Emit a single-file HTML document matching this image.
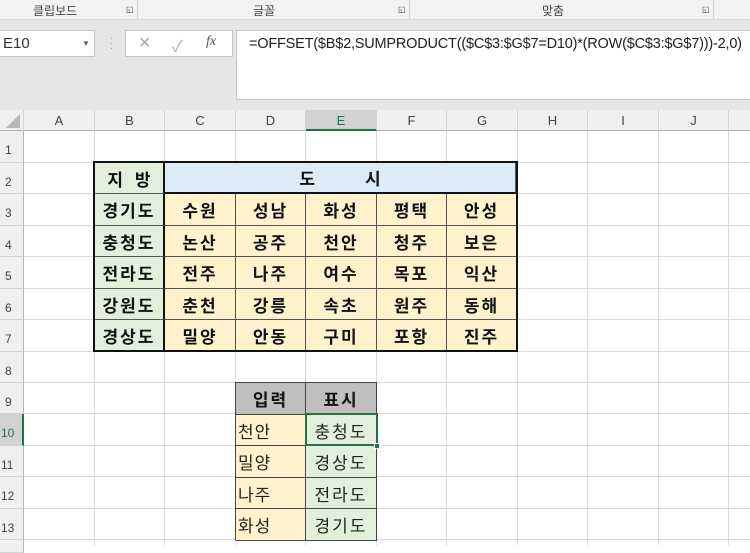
<!DOCTYPE html>
<html><head><meta charset="utf-8"><style>
*{margin:0;padding:0;box-sizing:border-box}
body{width:750px;height:545px;overflow:hidden;background:#fff;position:relative;font-family:"Liberation Sans","Noto Sans CJK KR",sans-serif}
.a{position:absolute}
.rib{left:0;top:0;width:750px;height:20px;background:#f3f3f3;border-bottom:1px solid #d6d6d6;font-size:12px;color:#444}
.gray{left:0;top:20px;width:750px;height:90px;background:#e6e6e6}
.box{background:#fff;border:1px solid #c6c6c6}
.ch{top:110px;height:21px;background:#efefef;border-right:1px solid #d4d4d4;border-bottom:1px solid #b5b5b5;font-size:13px;color:#444;text-align:center;line-height:21px}
.rh{left:0;width:24px;background:#efefef;border-bottom:1px solid #d4d4d4;border-right:1px solid #b5b5b5;font-size:12px;color:#444;padding-left:5px;padding-top:12px}
.vl{top:131px;width:1px;height:414px;background:#dadada}
.hl{left:24px;width:726px;height:1px;background:#dadada}
.c{display:flex;align-items:center;justify-content:center;font-family:"Noto Sans CJK KR","WenQuanYi Zen Hei",sans-serif;font-size:17px;font-weight:bold;color:#111;border-right:1px solid #555;border-bottom:1px solid #555;letter-spacing:2px}
.g{background:#e2efda}.y{background:#fff2cc}.b{background:#ddebf7}.h{background:#bfbfbf}
.n{font-weight:normal;color:#222}
</style></head><body>
<div class="a rib">
<span class="a" style="left:33px;top:2px">클립보드</span><span class="a" style="left:126px;top:5px;font-size:8px">◱</span>
<div class="a" style="left:137px;top:0;width:1px;height:19px;background:#d0d0d0"></div>
<span class="a" style="left:253px;top:2px">글꼴</span><span class="a" style="left:398px;top:5px;font-size:8px">◱</span>
<div class="a" style="left:409px;top:0;width:1px;height:19px;background:#d0d0d0"></div>
<span class="a" style="left:542px;top:2px">맞춤</span><span class="a" style="left:702px;top:5px;font-size:8px">◱</span>
<div class="a" style="left:713px;top:0;width:1px;height:19px;background:#d0d0d0"></div>
</div>
<div class="a gray"></div>
<div class="a box" style="left:-2px;top:30px;width:97px;height:27px;font-size:15px;color:#333;padding:4px 0 0 4px">E10<span class="a" style="left:83px;top:8px;font-size:8px;color:#666">▼</span></div>
<div class="a" style="left:110px;top:36px;color:#999;font-size:10px;line-height:5px">·<br>·<br>·</div>
<div class="a box" style="left:125px;top:30px;width:108px;height:27px;color:#aaa;font-size:16px">
<span class="a" style="left:12px;top:2px">✕</span><span class="a" style="left:46px;top:2px">✓</span><span class="a" style="left:80px;top:3px;font-family:'Liberation Serif',serif;font-style:italic;color:#555;font-size:14px">fx</span></div>
<div class="a box" style="left:236px;top:30px;width:520px;height:70px;font-size:14.5px;color:#222;padding:5px 0 0 12px;letter-spacing:-0.2px">=OFFSET($B$2,SUMPRODUCT(($C$3:$G$7=D10)*(ROW($C$3:$G$7)))-2,0)</div>

<div class="a ch" style="left:0;width:24px"><div class="a" style="left:6px;top:4px;width:0;height:0;border-left:14px solid transparent;border-bottom:14px solid #b8b8b8"></div></div>
<div class="a ch" style="left:24px;width:71px">A</div>
<div class="a ch" style="left:95px;width:70px">B</div>
<div class="a ch" style="left:165px;width:71px">C</div>
<div class="a ch" style="left:236px;width:70px">D</div>
<div class="a ch" style="left:306px;width:71px;background:#d2d2d2;color:#217346;border-bottom:2px solid #217346">E</div>
<div class="a ch" style="left:377px;width:70px">F</div>
<div class="a ch" style="left:447px;width:71px">G</div>
<div class="a ch" style="left:518px;width:70px">H</div>
<div class="a ch" style="left:588px;width:71px">I</div>
<div class="a ch" style="left:659px;width:70px">J</div>
<div class="a ch" style="left:729px;width:30px"></div>

<div class="a rh" style="top:131px;height:32px">1</div>
<div class="a rh" style="top:163px;height:31px">2</div>
<div class="a rh" style="top:194px;height:32px">3</div>
<div class="a rh" style="top:226px;height:31px">4</div>
<div class="a rh" style="top:257px;height:32px">5</div>
<div class="a rh" style="top:289px;height:31px">6</div>
<div class="a rh" style="top:320px;height:32px">7</div>
<div class="a rh" style="top:352px;height:31px">8</div>
<div class="a rh" style="top:383px;height:31px">9</div>
<div class="a rh" style="top:414px;height:32px;background:#d2d2d2;color:#217346;border-right:2px solid #217346;padding-left:1px">10</div>
<div class="a rh" style="top:446px;height:31px;padding-left:1px">11</div>
<div class="a rh" style="top:477px;height:32px;padding-left:1px">12</div>
<div class="a rh" style="top:509px;height:31px;padding-left:1px">13</div>
<div class="a rh" style="top:540px;height:10px"></div>

<div class="a vl" style="left:94px"></div><div class="a vl" style="left:164px"></div><div class="a vl" style="left:235px"></div><div class="a vl" style="left:305px"></div><div class="a vl" style="left:376px"></div><div class="a vl" style="left:446px"></div><div class="a vl" style="left:517px"></div><div class="a vl" style="left:587px"></div><div class="a vl" style="left:658px"></div><div class="a vl" style="left:728px"></div>
<div class="a hl" style="top:162px"></div><div class="a hl" style="top:193px"></div><div class="a hl" style="top:225px"></div><div class="a hl" style="top:256px"></div><div class="a hl" style="top:288px"></div><div class="a hl" style="top:319px"></div><div class="a hl" style="top:351px"></div><div class="a hl" style="top:382px"></div><div class="a hl" style="top:413px"></div><div class="a hl" style="top:445px"></div><div class="a hl" style="top:476px"></div><div class="a hl" style="top:508px"></div><div class="a hl" style="top:539px"></div>

<div class="a" style="left:93px;top:161px;width:425px;height:191px;border:2px solid #111;background:#111">
<div class="a c g" style="left:0;top:0;width:70px;height:31px;letter-spacing:4px;border-right:2px solid #111;padding-left:4px">지 방</div>
<div class="a c b" style="left:70px;top:0;width:351px;height:31px;letter-spacing:50px;padding-left:50px;border-bottom:2px solid #111">도시</div>
<div class="a c g" style="left:0;top:31px;width:70px;height:32px;border-right:2px solid #111">경기도</div>
<div class="a c y" style="left:70px;top:31px;width:71px;height:32px">수원</div><div class="a c y" style="left:141px;top:31px;width:70px;height:32px">성남</div><div class="a c y" style="left:211px;top:31px;width:71px;height:32px">화성</div><div class="a c y" style="left:282px;top:31px;width:70px;height:32px">평택</div><div class="a c y" style="left:352px;top:31px;width:69px;height:32px;border-right:none">안성</div>
<div class="a c g" style="left:0;top:63px;width:70px;height:31px;border-right:2px solid #111">충청도</div>
<div class="a c y" style="left:70px;top:63px;width:71px;height:31px">논산</div><div class="a c y" style="left:141px;top:63px;width:70px;height:31px">공주</div><div class="a c y" style="left:211px;top:63px;width:71px;height:31px">천안</div><div class="a c y" style="left:282px;top:63px;width:70px;height:31px">청주</div><div class="a c y" style="left:352px;top:63px;width:69px;height:31px;border-right:none">보은</div>
<div class="a c g" style="left:0;top:94px;width:70px;height:32px;border-right:2px solid #111">전라도</div>
<div class="a c y" style="left:70px;top:94px;width:71px;height:32px">전주</div><div class="a c y" style="left:141px;top:94px;width:70px;height:32px">나주</div><div class="a c y" style="left:211px;top:94px;width:71px;height:32px">여수</div><div class="a c y" style="left:282px;top:94px;width:70px;height:32px">목포</div><div class="a c y" style="left:352px;top:94px;width:69px;height:32px;border-right:none">익산</div>
<div class="a c g" style="left:0;top:126px;width:70px;height:31px;border-right:2px solid #111">강원도</div>
<div class="a c y" style="left:70px;top:126px;width:71px;height:31px">춘천</div><div class="a c y" style="left:141px;top:126px;width:70px;height:31px">강릉</div><div class="a c y" style="left:211px;top:126px;width:71px;height:31px">속초</div><div class="a c y" style="left:282px;top:126px;width:70px;height:31px">원주</div><div class="a c y" style="left:352px;top:126px;width:69px;height:31px;border-right:none">동해</div>
<div class="a c g" style="left:0;top:157px;width:70px;height:30px;border-right:2px solid #111;border-bottom:none">경상도</div>
<div class="a c y" style="left:70px;top:157px;width:71px;height:30px;border-bottom:none">밀양</div><div class="a c y" style="left:141px;top:157px;width:70px;height:30px;border-bottom:none">안동</div><div class="a c y" style="left:211px;top:157px;width:71px;height:30px;border-bottom:none">구미</div><div class="a c y" style="left:282px;top:157px;width:70px;height:30px;border-bottom:none">포항</div><div class="a c y" style="left:352px;top:157px;width:69px;height:30px;border-right:none;border-bottom:none">진주</div>
</div>

<div class="a" style="left:235px;top:382px;width:142px;height:158px;border-left:1px solid #444;border-top:1px solid #444">
<div class="a c h" style="left:0;top:0;width:70px;height:32px;border-color:#444">입력</div>
<div class="a c h" style="left:70px;top:0;width:71px;height:32px;border-color:#444">표시</div>
<div class="a c y n" style="left:0;top:32px;width:70px;height:31px;justify-content:flex-start;padding-left:2px;letter-spacing:1px;border-color:#444">천안</div>
<div class="a c g n" style="left:70px;top:32px;width:71px;height:31px;border-color:#444">충청도</div>
<div class="a c y n" style="left:0;top:63px;width:70px;height:32px;justify-content:flex-start;padding-left:2px;letter-spacing:1px;border-color:#444">밀양</div>
<div class="a c g n" style="left:70px;top:63px;width:71px;height:32px;border-color:#444">경상도</div>
<div class="a c y n" style="left:0;top:95px;width:70px;height:31px;justify-content:flex-start;padding-left:2px;letter-spacing:1px;border-color:#444">나주</div>
<div class="a c g n" style="left:70px;top:95px;width:71px;height:31px;border-color:#444">전라도</div>
<div class="a c y n" style="left:0;top:126px;width:70px;height:32px;justify-content:flex-start;padding-left:2px;letter-spacing:1px;border-color:#444">화성</div>
<div class="a c g n" style="left:70px;top:126px;width:71px;height:32px;border-color:#444">경기도</div>
</div>
<div class="a" style="left:305px;top:413px;width:73px;height:33px;border:2px solid #217346"></div>
<div class="a" style="left:374px;top:443px;width:6px;height:6px;background:#217346;border:1px solid #fff"></div>
</body></html>
